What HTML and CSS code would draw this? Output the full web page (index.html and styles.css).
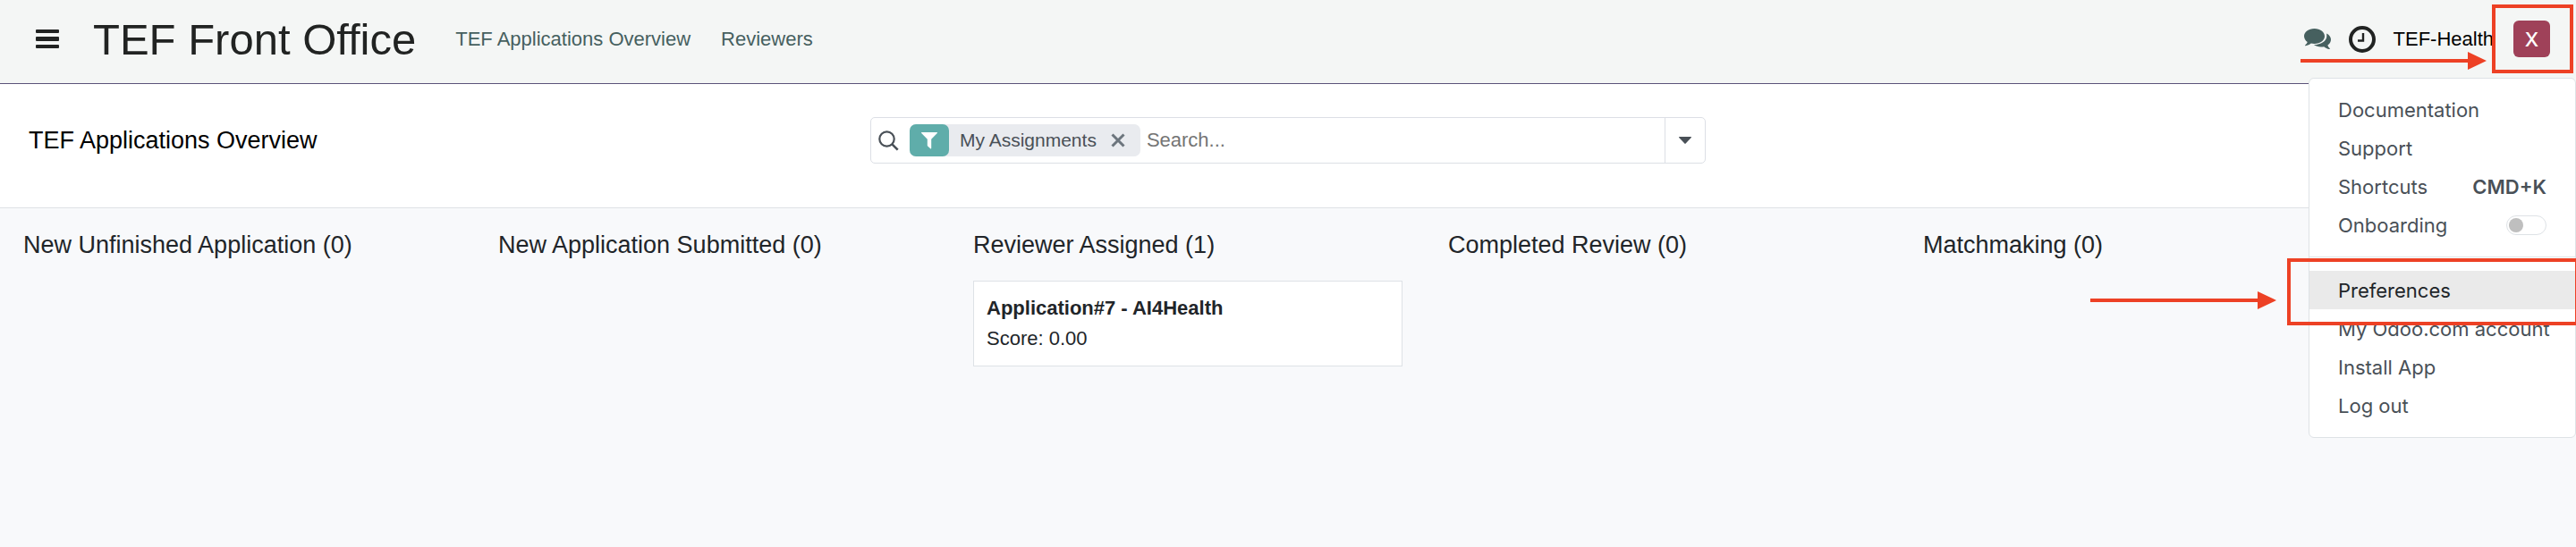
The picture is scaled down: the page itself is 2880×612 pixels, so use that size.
FILE: index.html
```html
<!DOCTYPE html>
<html lang="en">
<head>
<meta charset="utf-8">
<title>TEF Front Office</title>
<link rel="stylesheet" href="styles.css">
</head>
<body>
<div class="page">
  <header class="navbar">
    <button class="icon-button menu-button" type="button" aria-label="Menu">
      <svg width="26" height="22" viewBox="0 0 26 22" fill="currentColor"><rect y="0" width="26" height="4" rx="1"/><rect y="8" width="26" height="5" rx="1"/><rect y="17" width="26" height="4" rx="1"/></svg>
    </button>
    <h1 class="brand">TEF Front Office</h1>
    <nav class="nav-links">
      <a href="#">TEF Applications Overview</a>
      <a href="#">Reviewers</a>
    </nav>
    <div class="systray">
      <button class="icon-button chat-button" type="button" aria-label="Messages">
        <svg width="30" height="24" viewBox="0 0 30 24" fill="currentColor"><path d="M11.500 0C18 0 23 3.700 23 8.500S18 17 11.500 17c-1.300 0-2.500-.1-3.700-.4C6 18 4 19 1.700 19.300c-.6 0-.8-.6-.3-1 1.200-1 1.900-1.900 2.300-3.300C1.400 13.400 0 11 0 8.500 0 3.700 5 0 11.500 0z"/><path d="M25.200 5.600C28.200 7.200 30 9.600 30 12.200c0 2.500-1.300 4.700-3.600 6.300.4 1.500 1.100 2.400 2.200 3.500.5.500.2 1-.4 1-2.200-.3-4.300-1.400-6-2.800-4.100.9-8.500 0-11.300-2.100 8-.1 14.400-4.100 14.400-9.600 0-1-.1-2-.1-2.900z"/></svg>
      </button>
      <button class="icon-button clock-button" type="button" aria-label="Activities">
        <svg width="30" height="30" viewBox="0 0 30 30" fill="none" stroke="currentColor"><circle cx="15" cy="15" r="13" stroke-width="4"/><path d="M16 8v8.500H10" stroke-width="2.400"/></svg>
      </button>
      <span class="company">TEF-Health</span>
      <button class="avatar" type="button" aria-label="User menu">X</button>
    </div>
  </header>

  <section class="control-panel">
    <h2 class="view-title">TEF Applications Overview</h2>
    <div class="search" role="search">
      <svg class="search-icon" width="23" height="23" viewBox="0 0 23 23" fill="none" stroke="currentColor" stroke-width="2.200"><circle cx="9.500" cy="9.500" r="8.200"/><path d="M15.400 15.400l6.300 6.300" stroke-width="2.600"/></svg>
      <div class="facet">
        <span class="facet-icon"><svg width="18" height="19" viewBox="0 0 18 19" fill="currentColor"><path d="M.6 0h16.800c.6 0 .8.700.4 1.100L11.200 7.800v10c0 .7-.6.9-1 .5l-3-2.900c-.3-.3-.4-.5-.4-.9V7.800L.2 1.100C-.2.700 0 0 .6 0z"/></svg></span>
        <span class="facet-label">My Assignments</span>
        <button class="facet-remove" type="button" aria-label="Remove">
          <svg width="16" height="16" viewBox="0 0 16 16" stroke="currentColor" stroke-width="3"><path d="M1.500 1.500l13 13M14.500 1.500l-13 13"/></svg>
        </button>
      </div>
      <input class="search-input" type="text" placeholder="Search..." aria-label="Search">
      <button class="search-toggle" type="button" aria-label="Search options">
        <svg width="14" height="8" viewBox="0 0 14 8" fill="currentColor"><path d="M.5 0h13c.5 0 .6.500.3.900L7.600 7.600c-.3.400-.9.400-1.200 0L.2.900C-.1.500 0 0 .5 0z"/></svg>
      </button>
    </div>
  </section>

  <main class="board">
    <section class="column"><h3>New Unfinished Application (0)</h3></section>
    <section class="column"><h3>New Application Submitted (0)</h3></section>
    <section class="column">
      <h3>Reviewer Assigned (1)</h3>
      <article class="card"><strong>Application#7 - AI4Health</strong><span>Score: 0.00</span></article>
    </section>
    <section class="column"><h3>Completed Review (0)</h3></section>
    <section class="column"><h3>Matchmaking (0)</h3></section>
  </main>

  <div class="user-menu">
    <a href="#">Documentation</a>
    <a href="#">Support</a>
    <a href="#">Shortcuts <b>CMD+K</b></a>
    <label class="menu-row">Onboarding <input class="switch" type="checkbox"></label>
    <hr>
    <a class="active" href="#">Preferences</a>
    <a href="#">My Odoo.com account</a>
    <a href="#">Install App</a>
    <a href="#">Log out</a>
  </div>

  <div class="mark mark-avatar"></div>
  <div class="mark mark-preferences"></div>
  <svg class="arrow arrow-avatar" width="208" height="22" viewBox="0 0 208 22"><path d="M0 9h187V1l21 10-21 10v-8H0z"/></svg>
  <svg class="arrow arrow-preferences" width="208" height="22" viewBox="0 0 208 22"><path d="M0 9h187V1l21 10-21 10v-8H0z"/></svg>
</div>
</body>
</html>
```

FILE: styles.css
```css
* { box-sizing: border-box; }

body {
  margin: 0;
  font-family: "Liberation Sans", Arial, sans-serif;
  font-size: 22px;
  color: #212529;
}

h1, h2, h3 { margin: 0; font-weight: 400; }

a { color: inherit; text-decoration: none; }

button {
  padding: 0;
  border: 0;
  background: none;
  font: inherit;
  color: inherit;
}

svg { display: block; }

.page {
  position: relative;
  display: flex;
  flex-direction: column;
  min-height: 100vh;
  overflow: hidden;
}

.navbar {
  display: flex;
  align-items: center;
  height: 94px;
  padding: 0 29px 6px 40px;
  background: #f4f6f5;
  border-bottom: 1px solid #5b5379;
  color: #212322;
}

.menu-button { margin-right: 38px; }

.brand { font-size: 49px; line-height: 56px; }

.nav-links {
  display: flex;
  gap: 34px;
  margin-left: 44px;
  color: #46605f;
}

.systray {
  display: flex;
  align-items: center;
  margin-left: auto;
}

.chat-button { margin-right: 20px; color: #46605f; }
.clock-button { margin-right: 20px; }

.company { margin-right: 22px; color: #000; }

.avatar {
  width: 41px;
  height: 41px;
  border-radius: 6px;
  background: #9f4159;
  color: #fff;
  font-family: Inter, sans-serif;
  font-size: 22px;
  font-weight: 500;
}

.control-panel {
  display: grid;
  grid-template-columns: 1fr 934px 1fr;
  align-items: start;
  height: 139px;
  padding: 37px 32px 0;
  background: #fff;
  border-bottom: 1px solid #dee2e6;
}

.view-title { font-size: 27px; line-height: 52px; color: #000; }

.search {
  display: flex;
  align-items: center;
  height: 52px;
  padding-left: 8px;
  border: 1px solid #dcdfe5;
  border-radius: 5px;
  color: #495057;
}

.search-icon { margin-right: 12px; }

.facet {
  display: flex;
  align-items: center;
  height: 36px;
  margin-right: 7px;
  padding-right: 17px;
  border-radius: 7px;
  background: #e9ebef;
}

.facet-icon {
  display: grid;
  place-items: center;
  width: 44px;
  height: 36px;
  border-radius: 7px;
  background: #5fadaa;
  color: #fff;
}

.facet-label { margin: 0 16px 0 12px; font-size: 21px; }

.facet-remove { color: #6c757d; }

.search-input {
  flex: 1;
  min-width: 0;
  padding: 0;
  border: 0;
  outline: 0;
  background: none;
  font: inherit;
}

.search-input::placeholder { color: #757575; opacity: 1; }

.search-toggle {
  display: grid;
  place-items: center;
  width: 45px;
  height: 50px;
  border-left: 1px solid #dcdfe5;
}

.board {
  display: flex;
  flex: 1;
  padding-left: 26px;
  background: #f8f9fb;
}

.column {
  flex: 0 0 531px;
  padding: 24px 51px 0 0;
}

.column h3 { font-size: 27px; line-height: 34px; }

.card {
  display: flex;
  flex-direction: column;
  height: 96px;
  margin-top: 23px;
  padding: 13px 14px;
  border: 1px solid #dee2e6;
  background: #fff;
  line-height: 34px;
}

.user-menu {
  position: absolute;
  top: 87px;
  right: 0;
  width: 299px;
  padding: 13px 0 14px;
  border: 1px solid #dee2e6;
  border-radius: 6px;
  background: #fff;
  color: #495057;
  font-family: Inter, sans-serif;
  font-size: 22px;
}

.user-menu a,
.menu-row {
  display: flex;
  align-items: center;
  justify-content: space-between;
  height: 43px;
  padding: 0 32px;
  white-space: nowrap;
}

.user-menu b { font-weight: 600; }

.user-menu .active { background: #eaeaea; color: #212529; }

.user-menu hr {
  height: 1px;
  margin: 14px 0 15px;
  border: 0;
  background: #dee2e6;
}

.switch {
  appearance: none;
  display: flex;
  align-items: center;
  width: 45px;
  height: 22px;
  margin: 0;
  padding-left: 2px;
  border: 1px solid #dee2e6;
  border-radius: 11px;
}

.switch::before {
  content: "";
  width: 16px;
  height: 16px;
  border-radius: 50%;
  background: #bfbfbf;
}

.mark {
  position: absolute;
  border: 4px solid #ed4125;
  pointer-events: none;
}

.mark-avatar { top: 5px; right: 3px; width: 91px; height: 77px; }
.mark-preferences { top: 289px; right: -3px; width: 326px; height: 75px; }

.arrow { position: absolute; fill: #ed4125; }
.arrow-avatar { top: 57px; right: 100px; }
.arrow-preferences { top: 325px; right: 335px; }
```
